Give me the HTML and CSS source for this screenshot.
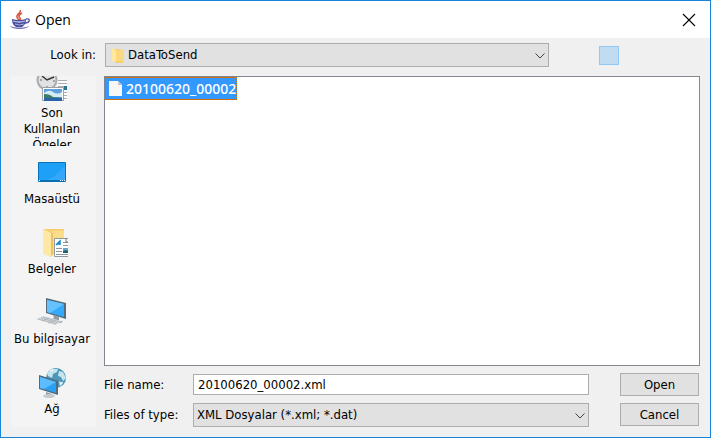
FILE: index.html
```html
<!DOCTYPE html>
<html lang="tr">
<head>
    <meta charset="UTF-8">
    <meta name="viewport" content="width=device-width, initial-scale=1.0">
    <title>Open</title>
    <link rel="stylesheet" href="styles.css">
</head>
<body>

<div class="window">
    <header class="titlebar">
        <svg class="app-icon" width="20" height="20" viewBox="0 0 20 20" fill="none">
            <path d="M10 0c2 3-4 4-3 7 0 1 1 2 2 3M12 3c-3 2-4 3-2 5 1 1 0 2-1 2" stroke="#d8583f" stroke-width="1.6"/>
            <path d="M2 9q7 2 14 0c0 4-1 6-4 8H6C3 15 2 13 2 9z" fill="#494f9c"/>
            <path d="M3 11q6 2 12 0" stroke="#bfc5eb" stroke-width="1.3"/>
            <path d="M16 9c5-1 4 4-1 4" stroke="#5158a0" stroke-width="1.4"/>
            <path d="M0 16c2 4 17 4 19 0-4 2-14 2-19 0z" fill="#6b72b8"/>
            <path d="M5 14q4 2 9 0" stroke="#a9afe0"/>
        </svg>
        <h1>Open</h1>
        <button class="close-button" aria-label="Close">
            <svg width="12" height="12" viewBox="0 0 12 12" fill="none" stroke="#000" stroke-width="1.1"><path d="M0 0l12 12M12 0L0 12"/></svg>
        </button>
    </header>

    <div class="lookin">
        <label for="folder">Look in:</label>
        <div class="combo folder-combo">
            <svg class="folder-icon" width="12" height="15" viewBox="0 0 12 15">
                <path d="M0 1h8l3 2v12H3z" fill="#f3d06c"/>
                <path d="M0 0l4 2v12l-4-1z" fill="#ffe79e"/>
                <path d="M4 2h8v11H4z" fill="#fbd980"/>
            </svg>
            <select id="folder"><option>DataToSend</option></select>
            <svg class="chevron" width="10" height="6" viewBox="0 0 10 6" fill="none" stroke="#444"><path d="M.5.5L5 5 9.500.5"/></svg>
        </div>
        <div class="toolbar"><button class="tool-button" aria-label="Up one level"></button></div>
    </div>

    <div class="content">
        <nav class="places">
            <button class="place">
                <svg width="32" height="32" viewBox="0 0 32 32">
                    <circle cx="11" cy="9" r="10.500" fill="#a9abae"/>
                    <circle cx="11" cy="9" r="8.500" fill="#e0e1e3"/>
                    <path d="M6 5l5 4 7-3" fill="none" stroke="#333" stroke-width="1.400"/>
                    <path d="M11 15v2M4 9h2M17 10h2" stroke="#666"/>
                    <path d="M22 9h9v20h-9z" fill="#fbfbfb"/>
                    <path d="M22 9.500h9M22 12.500h9M22 15.500h6M28 21.500h3M28 24.500h3M28 27.500h3" stroke="#a9aeb3"/>
                    <path d="M28 15h3v4h-3z" fill="#2b7390"/>
                    <path d="M6.500 16.500h21v13h-21z" fill="#fff" stroke="#9da1a5"/>
                    <path d="M8 18h18v12H8z" fill="#5f9fe0"/>
                    <path d="M8 22q5-4 9-1t9 0v5H8z" fill="#d3edf5"/>
                    <path d="M8 23q6 0 9 3l9 1v1H8z" fill="#397b65"/>
                    <path d="M8 27h18v3H8z" fill="#2c64a9"/>
                </svg>
                <span>Son Kullanılan Ögeler</span>
            </button>
            <button class="place">
                <svg width="32" height="32" viewBox="0 0 32 32">
                    <path d="M2.500 5.500h27v19h-27z" fill="#1fa0f7" stroke="#0873b8"/>
                    <path d="M29 6v10L9 24h20z" fill="#3fb0ff"/>
                    <path d="M14 24L29 9v15z" fill="#36a8fb"/>
                    <path d="M3 23h26v2H3z" fill="#0870b5"/>
                    <path d="M3 23h1v1H3zM24 23h1v1h-1zM26 23h1v1h-1zM28 23h1v1h-1z" fill="#fff"/>
                </svg>
                <span>Masaüstü</span>
            </button>
            <button class="place">
                <svg width="32" height="32" viewBox="0 0 32 32">
                    <path d="M7 2h21v25H7z" fill="#f5cf70"/>
                    <path d="M16 4h12v24H16z" fill="#fbdc8a"/>
                    <path d="M7 2l8 4v24l-8-3z" fill="#ffe8a4"/>
                    <path d="M15 6h2v21l-2 3z" fill="#e9c460"/>
                    <path d="M18.500 11.500h14v18h-14z" fill="#fff" stroke="#92999e"/>
                    <path d="M20 18l4-4v4M21 17h3" fill="none" stroke="#1688cc" stroke-width="1.500"/>
                    <path d="M27 15.500h5M27 18.500h5M20 21.500h6M20 24.500h6M20 27.500h12" stroke="#8e989e"/>
                    <path d="M27 21h5v4h-5z" fill="#67a7cc"/>
                    <path d="M27 24l3-1 2 1v2h-5z" fill="#245f6c"/>
                    <path d="M30 11v4h2" fill="none" stroke="#777"/>
                </svg>
                <span>Belgeler</span>
            </button>
            <button class="place">
                <svg width="32" height="32" viewBox="0 0 32 32">
                    <path d="M10 1l20 5v16l-20-6z" fill="#536b7b"/>
                    <path d="M11 3l17 4v13l-17-5z" fill="#35aafa"/>
                    <path d="M11 3l17 4-14 9-3-1z" fill="#66c2ff"/>
                    <path d="M17 18l6 2v4h4l-2 2-10-2 1-2 2-1z" fill="#919ca4"/>
                    <path d="M0 22l7-3 19 5-7 4z" fill="#d5dade"/>
                    <path d="M2 22l18 5M5 21l17 5M7 20l17 5M6 24l7-3M12 26l7-3" stroke="#a4adb4" stroke-width=".7"/>
                </svg>
                <span>Bu bilgisayar</span>
            </button>
            <button class="place">
                <svg width="32" height="32" viewBox="0 0 32 32">
                    <circle cx="20" cy="11" r="10" fill="#4e96b8"/>
                    <path d="M11 6l5-4 6 0-1 3-4 2-1 4-4-2zM23 4l4 1 3 6-3 3-2-4-3-1zM23 14l4 2-3 4z" fill="#c4e5ed"/>
                    <path d="M14 4l3-1M24 17l3-2" stroke="#fff"/>
                    <path d="M3 8l19 6v14L3 22z" fill="#526a79"/>
                    <path d="M4 10l16 5v11L4 21z" fill="#2a9ff4"/>
                    <path d="M4 10l16 5-12 7-4-1z" fill="#5bbcff"/>
                    <path d="M10 25l6 2v2h-6z" fill="#8f9ca5"/>
                    <ellipse cx="13" cy="29" rx="6" ry="2" fill="#c4ccd2"/>
                </svg>
                <span>Ağ</span>
            </button>
        </nav>

        <main class="browser">
            <ul class="file-list">
                <li class="file selected">
                    <svg width="13" height="15" viewBox="0 0 13 15">
                        <path d="M0 0h9l4 4v11H0z" fill="#f7f7f7"/>
                        <path d="M9 0v4h4z" fill="#c3c3c3"/>
                    </svg>
                    20100620_00002
                </li>
            </ul>

            <form class="footer">
                <label for="filename">File name:</label>
                <input type="text" id="filename" value="20100620_00002.xml">
                <button type="button" class="action">Open</button>

                <label for="filetype">Files of type:</label>
                <div class="combo">
                    <select id="filetype"><option>XML Dosyalar (*.xml; *.dat)</option></select>
                    <svg class="chevron" width="10" height="6" viewBox="0 0 10 6" fill="none" stroke="#444"><path d="M.5.5L5 5 9.500.5"/></svg>
                </div>
                <button type="button" class="action">Cancel</button>
            </form>
        </main>
    </div>
</div>

</body>
</html>
```

FILE: styles.css
```css
* {
    box-sizing: border-box;
}
body {
    margin: 0;
    font-family: "DejaVu Sans Condensed", "DejaVu Sans", Tahoma, sans-serif;
    font-stretch: condensed;
    font-size: 13px;
    line-height: 16px;
    color: #000;
}
button, input, select {
    font: inherit;
    color: inherit;
    margin: 0;
}
.window {
    display: flex;
    flex-direction: column;
    min-height: 100vh;
    background-color: #f0f0f0;
    border: 1px solid #1883d7;
}
.titlebar {
    display: flex;
    align-items: center;
    height: 37px;
    padding: 0 13px 0 9px;
    background-color: white;
}
.titlebar h1 {
    flex: 1;
    margin: 0 0 0 5px;
    font-family: "Open Sans", "Noto Sans", sans-serif;
    font-stretch: normal;
    font-size: 14px;
    font-weight: normal;
    line-height: 20px;
}
.close-button {
    display: flex;
    padding: 2px;
    border: none;
    background: none;
}
.close-button svg {
    overflow: visible;
}
.lookin {
    display: flex;
    align-items: center;
    padding: 5px 10px 9px;
}
.lookin label {
    width: 94px;
    padding-right: 9px;
    text-align: right;
}
.combo {
    position: relative;
    flex: 1;
}
.combo select {
    display: block;
    width: 100%;
    height: 24px;
    padding: 0 20px 0 3px;
    border: 1px solid #adadad;
    border-radius: 0;
    background-color: #e1e1e1;
    appearance: none;
}
.folder-combo select {
    padding-left: 22px;
}
.folder-icon {
    position: absolute;
    top: 5px;
    left: 7px;
}
.chevron {
    position: absolute;
    top: 10px;
    right: 4px;
    pointer-events: none;
}
.toolbar {
    width: 151px;
    padding-left: 50px;
}
.tool-button {
    display: block;
    width: 20px;
    height: 19px;
    padding: 0;
    border: 1px solid #90c8f6;
    background-color: #c0dcf3;
}
.content {
    display: flex;
    flex: 1;
    padding: 0 10px 10px;
}
.places {
    width: 85px;
    margin-right: 8px;
    background-color: #f4f4f4;
}
.place {
    display: flex;
    flex-direction: column;
    align-items: center;
    justify-content: center;
    gap: 2px;
    width: 100%;
    height: 70px;
    padding: 2px 6px 0 3px;
    border: none;
    background: none;
    overflow: hidden;
}
.place svg {
    flex-shrink: 0;
}
.browser {
    display: flex;
    flex-direction: column;
    flex: 1;
}
.file-list {
    flex: 1;
    margin: 0;
    padding: 0;
    list-style: none;
    background-color: white;
    border: 1px solid #828790;
}
.file {
    display: flex;
    align-items: center;
    gap: 4px;
    width: fit-content;
    height: 23px;
    padding: 0 0 0 3px;
    border: 1px dotted transparent;
}
.file.selected {
    background-color: #3399ff;
    border-color: #cc6600;
    color: white;
    font-family: "Noto Sans", sans-serif;
    font-stretch: normal;
    font-size: 14px;
    font-weight: 500;
}
.footer {
    display: grid;
    grid-template-columns: 89px 1fr 79px;
    align-items: center;
    row-gap: 7px;
    padding: 7px 1px 0 0;
}
.footer input {
    height: 21px;
    padding: 0 4px;
    border: 1px solid #adadad;
    background-color: white;
}
.footer input, .footer .combo {
    margin-right: 31px;
}
.action {
    align-self: start;
    height: 23px;
    padding: 0;
    border: 1px solid #adadad;
    background-color: #e1e1e1;
}
```
